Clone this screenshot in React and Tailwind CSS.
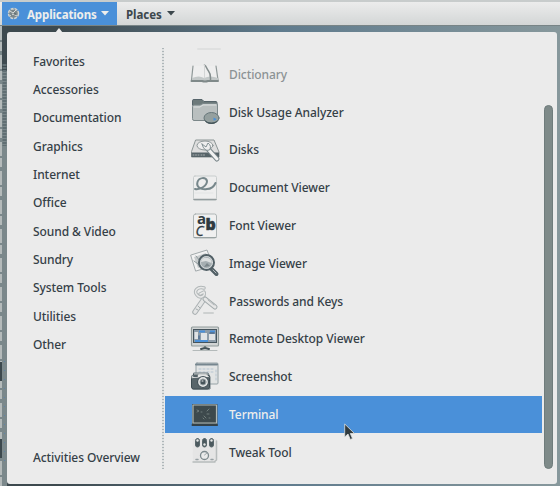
import React from 'react';

function IconFrame({ children }) {
  return (
    <svg viewBox="0 0 30 30" className="h-[30px] w-[30px] shrink-0 overflow-visible" fill="none" strokeLinecap="round" strokeLinejoin="round">
      {children}
    </svg>
  );
}

const DictionaryIcon = () => (
  <IconFrame>
    <path d="M3 7 L1.5 22 L28 22 L26.5 7" fill="#eeeeee" />
    <path d="M3 7 L1.500 21 M26 7 L28 21" stroke="#8f9898" strokeWidth="1.200" />
    <path d="M2 19 Q9 16 14 19 Q20 16 28 19 V22 H2Z" fill="#c3c8c8" />
    <path d="M1.500 22 H12 Q15 23 18 22 H28" stroke="#7f8989" strokeWidth="2" />
    <path d="M14.500 6 C17 8 16 9 18.500 12 C21 15 20.500 17 20.500 21" stroke="#848d8d" strokeWidth="1.500" />
    <path d="M14.500 6 V19" stroke="#d3d5d5" />
  </IconFrame>
);

const DiskUsageIcon = () => (
  <IconFrame>
    <path d="M2.500 8 V3.500 Q2.500 2.500 4 2.500 H12 L14 4.500 H26 Q27 4.500 27 6 V9Z" fill="#6d7a7b" stroke="#56646a" />
    <path d="M2.500 9 Q2.500 8 4 8 H10 L13 6.500 H26 Q27.500 6.500 27.500 8 V22 Q27.500 23.500 26 23.500 H4 Q2.500 23.500 2.500 22Z" fill="#b9bfbf" stroke="#7b8789" />
    <path d="M4 10 H10 L13 8 H26" stroke="#dfe2e2" />
    <ellipse cx="21.500" cy="21" rx="7.500" ry="5.500" fill="#95a09f" stroke="#66767a" />
    <path d="M14.500 23 Q21 28 28.500 23 Q26 27 21.500 27 Q16 27 14.500 23Z" fill="#46565b" />
    <path d="M23.500 20.500 L26.500 22 Q26 23.500 23.500 23.500Z" fill="#4a90d9" />
  </IconFrame>
);

const DisksIcon = () => (
  <IconFrame>
    <path d="M6 5 H24 L29 17 V22 H1.500 V17Z" fill="#dedede" stroke="#8b9494" />
    <path d="M1.500 17.500 H29 V22 H1.500Z" fill="#566368" />
    <ellipse cx="15" cy="10.500" rx="8" ry="4.500" stroke="#8d9697" fill="#eeeeee" />
    <path d="M3 20 H9 M11 20 H15" stroke="#a9b0b1" strokeDasharray="1 1.500" />
    <path d="M18 14 L27 24" stroke="#7b878b" strokeWidth="5" />
    <path d="M18 14 L27 24" stroke="#f3f3f3" strokeWidth="3" />
    <path d="M12 9 L16 12 L18 8 Q22 11 19.500 15 Q14 17 12 9Z" fill="#eeeeee" stroke="#829093" />
  </IconFrame>
);

const DocumentIcon = () => (
  <IconFrame>
    <rect x="3.500" y="3" width="23" height="24" rx="1.500" fill="#eeeeee" stroke="#c8cdcd" />
    <path d="M4 26.500 H26" stroke="#929b9d" strokeWidth="1.500" />
    <path d="M5 16 C10 17 17 13 17 8 C16 4 9 4 7.500 9 C6 14 11 17 17 16 Q23 16 25.500 10" stroke="#77878b" strokeWidth="2" />
    <path d="M5 20 H23" stroke="#e2e4e4" />
  </IconFrame>
);

const FontIcon = () => (
  <IconFrame>
    <rect x="3.500" y="3" width="23" height="24" rx="2" fill="#f0f0f0" stroke="#aeb5b5" />
    <path d="M4 26.500 H26" stroke="#99a2a2" />
    <text x="7" y="13" fill="#303b40" className="font-['Open_Sans',sans-serif] text-[15px] font-bold">a</text>
    <text x="15.500" y="18.500" fill="#303b40" stroke="#303b40" strokeWidth=".5" className="font-['Open_Sans',sans-serif] text-[16px] font-extrabold">b</text>
    <text x="5.500" y="24.500" fill="#303b40" stroke="#303b40" strokeWidth=".3" className="font-['Open_Sans',sans-serif] text-[14px] italic">C</text>
  </IconFrame>
);

const ImageIcon = () => (
  <IconFrame>
    <path d="M1 7 L17 2 L23 18 L6 23Z" fill="#f2f2f2" stroke="#a3aaac" />
    <path d="M4 9 L16 5 L20 16 L8 20Z" fill="#c8cccd" />
    <path d="M4 13 L12 19 M6 8 L10 13" stroke="#8f9a9d" />
    <path d="M21.500 21 L26.500 26" stroke="#526066" strokeWidth="4" />
    <path d="M23 22 L26 25" stroke="#b3b9bc" strokeWidth="1" />
    <circle cx="16.500" cy="14.500" r="7.500" fill="#a6afb2" stroke="#526066" strokeWidth="2" />
    <path d="M11 14 Q12 8.500 18 10 Q22 11 21.500 15 L16 13Z" fill="#dde0e0" />
    <circle cx="16.500" cy="14.500" r="6" stroke="#dce0e1" strokeWidth=".8" />
    <path d="M14 19 L17 15 L20 18" fill="#7c878b" />
  </IconFrame>
);

const KeysIcon = () => (
  <IconFrame>
    <path d="M14 27 H23" stroke="#cdd0d0" strokeWidth="2" />
    <path d="M14 13 L5 26" stroke="#aab0b2" strokeWidth="5.500" />
    <path d="M14 13 L5 26" stroke="#e4e5e5" strokeWidth="3.500" />
    <path d="M8 20 L10 22 M6 23 L8 24" stroke="#a5adae" />
    <path d="M15 13 L25 21" stroke="#a2aaac" strokeWidth="5" />
    <path d="M15 13 L25 21" stroke="#e6e6e6" strokeWidth="3" />
    <path d="M18 14 L24 19" stroke="#b2b8ba" />
    <path d="M14 2 C8 0 3 5 7 9 C10 13 16 10 14 6 L10 8" stroke="#b1b7b8" strokeWidth="3.500" />
    <path d="M14 2 C8 0 3 5 7 9 C10 13 16 10 14 6 L10 8" stroke="#e8e8e8" strokeWidth="1.500" />
  </IconFrame>
);

const RemoteIcon = () => (
  <IconFrame>
    <rect x="1.500" y="3" width="27" height="19" rx="1" fill="#d1d4d4" stroke="#919b9b" strokeWidth="1.200" />
    <rect x="3" y="5" width="24" height="14" fill="#45545d" />
    <rect x="4" y="6" width="22" height="12" fill="#8c9ba8" />
    <path d="M4.500 8 H8 V15 H4.500Z M11 9 H17 V17 H11Z M19 10 H25 V16 H19Z" fill="#e0e3e5" />
    <path d="M9 7.500 H15 M20 7.500 H25 M5 17 H18" stroke="#4a90d9" strokeWidth="2" strokeLinecap="butt" />
    <path d="M20 9 H24 M9 12 V15" stroke="#4d6f93" strokeWidth="1.500" />
    <path d="M14 22 L13 25 H17 L16 22" fill="#768282" />
    <path d="M11 25 Q15 23.500 19 25" stroke="#435157" strokeWidth="2" />
    <path d="M3 26.500 H27" stroke="#b4baba" />
  </IconFrame>
);

const ScreenshotIcon = () => (
  <IconFrame>
    <rect x="6" y="1" width="22" height="21" rx="1" fill="#e2e4e4" stroke="#96a2a6" />
    <path d="M6 2.500 H28" stroke="#76868f" strokeWidth="2" strokeDasharray="10 1" />
    <path d="M26 8 V20 M9 7 H23 M9 10 H23" stroke="#b6c4d1" strokeDasharray="2 2" />
    <path d="M4 11 H18 L20 15 V27 H3Z" fill="#d4d7d7" stroke="#69777d" />
    <rect x="1.500" y="13" width="18" height="14" rx="2" fill="#58656a" stroke="#3e4c52" />
    <path d="M2 16 V14 H7 L9 12 H16 L19 15" fill="#e3e4e4" stroke="#b6bcbc" />
    <circle cx="13" cy="20" r="5.500" fill="#e3e5e5" stroke="#455359" strokeWidth="1.200" />
    <circle cx="13" cy="20" r="3" fill="#46545a" stroke="#98a1a4" />
    <path d="M12 19 H13" stroke="#f1f1f1" />
    <path d="M4 14 H7" stroke="#526066" strokeWidth="2" />
  </IconFrame>
);

const TerminalIcon = () => (
  <IconFrame>
    <rect x="2" y="4" width="25.500" height="22" rx=".5" fill="#414e53" />
    <path d="M3 5 H26.500 V23 H3Z" fill="#3d494c" stroke="#b2b9b5" strokeWidth="1.200" />
    <path d="M7 10 L9 11 L7 12 M11 12 H12 M14 16 L16 18 M19 9 L17 11 M13 18 L14 19 M17 14 H19 M19 18 H20" stroke="#7d8a88" strokeWidth=".8" />
    <path d="M2.500 25 H27" stroke="#344148" strokeWidth="2" />
  </IconFrame>
);

const TweakIcon = () => (
  <IconFrame>
    <path d="M2.500 2 H26.500 V24 L24 26 H3Z" fill="#e5e5e5" />
    <path d="M26.500 4 V23 L24 25 M3 25 H25" stroke="#b8bdbd" strokeWidth="1.500" />
    {[7.5, 14.5, 21.5].map((x, i) => (
      <g key={x}>
        <rect x={x - 2} y="1.500" width="4" height="8.500" rx="2" fill="#4c5a5f" stroke="#59676b" />
        <circle cx={x} cy={i === 1 ? 7.5 : 3.5} r="1.200" fill="#e6e8e8" />
      </g>
    ))}
    <circle cx="14.500" cy="18.500" r="4" fill="#e9eaea" stroke="#7c898d" strokeWidth="1.300" />
    <path d="M14.500 18 L17 16" stroke="#a0a8aa" />
    <path d="M6 22.500 H8 M21 22.500 H23" stroke="#98a1a4" strokeWidth="1.500" />
  </IconFrame>
);

const categories = ['Favorites', 'Accessories', 'Documentation', 'Graphics', 'Internet', 'Office', 'Sound & Video', 'Sundry', 'System Tools', 'Utilities', 'Other'];

const apps = [
  ['Dictionary', DictionaryIcon],
  ['Disk Usage Analyzer', DiskUsageIcon],
  ['Disks', DisksIcon],
  ['Document Viewer', DocumentIcon],
  ['Font Viewer', FontIcon],
  ['Image Viewer', ImageIcon],
  ['Passwords and Keys', KeysIcon],
  ['Remote Desktop Viewer', RemoteIcon],
  ['Screenshot', ScreenshotIcon],
  ['Terminal', TerminalIcon],
  ['Tweak Tool', TweakIcon],
];

function Caret() {
  return (
    <svg viewBox="0 0 8 5" className="mb-0.5 h-[5px] w-2 shrink-0">
      <path d="M0 0 H8 L4 4.500Z" fill="currentColor" />
    </svg>
  );
}

function TopBar() {
  return (
    <header className="flex h-[26px] border-b border-[#788486] border-t-2 border-t-[#c8cccc] bg-linear-to-b from-[#ececec] to-[#d3d6d6] pl-0.5 text-[11.5px] font-bold">
      <div className="flex w-[115px] items-center bg-[#4a90d9] pl-[5px] pt-0.5 text-[#eeeeec]">
        <svg viewBox="0 0 13 13" className="mb-0.5 h-[13px] w-[13px] shrink-0">
          <circle cx="6.500" cy="6.500" r="5" fill="#7d898b" stroke="#d0d3d0" strokeWidth="1.500" strokeDasharray="3 1" />
          <path d="M3 4 L6 6 L9 3 M3 9 L6 7 L10 9 M6 2 V5" stroke="#d9dbd8" fill="none" />
          <path d="M5 4 H7 M7 7 H9 M4 8 H5" stroke="#4c5b60" />
        </svg>
        <span className="ml-[7px] mr-[5px] w-[69px] whitespace-nowrap tracking-[-0.11px]">Applications</span>
        <Caret />
      </div>
      <div className="flex items-center pl-[9px] pt-0.5 text-[#3c474c]">
        <span className="mr-[5px] w-[36px] whitespace-nowrap tracking-[-0.05px]">Places</span>
        <Caret />
      </div>
    </header>
  );
}

export default function App() {
  return (
    <div className="h-[486px] w-[560px] overflow-hidden bg-[#8f9999] font-['Noto_Sans','Open_Sans',sans-serif] text-[12px] font-medium tracking-[-0.08px] text-[#354047]">
      <TopBar />
      <div className="relative flex h-[460px] bg-linear-to-r from-[#3d494e] from-10% via-[#5f7b8d] via-50% to-[#87989c] pl-[7px] pt-1.5">
        <svg className="absolute left-0 top-0 h-[460px] w-[7px]">
          <path d="M0 0 H7 V460 H0Z" fill="#7b888b" />
          <path d="M2 0 H7 V45 H2Z" fill="#3e4a50" />
          <path d="M4.500 38 V120" stroke="#606e73" strokeWidth="4" strokeDasharray="2 1" />
          <path d="M1 0 V460" stroke="#b4baba" strokeWidth="2" strokeDasharray="14 2 9 4" />
          <path d="M1 336 V355 M1 413 V432" stroke="#3c484d" strokeWidth="2" />
          <path d="M4.500 335 V440" stroke="#5e83a8" strokeDasharray="1 8" />
        </svg>
        <svg viewBox="0 0 8 5" className="absolute left-[55px] top-[2px] h-[5px] w-2">
          <path d="M0 5 L4 0 L8 5Z" fill="#ececec" />
        </svg>
        <main className="flex h-[452px] w-[550px] rounded-[3px] bg-[#ebebeb] pt-[15px]">
          <nav className="flex h-[425.4px] w-[155px] flex-col pl-[26px] pt-[0.4px]">
            {categories.map((name) => (
              <div key={name} className="flex h-[28.33px] items-center whitespace-nowrap">{name}</div>
            ))}
            <div className="mt-auto flex h-[28.33px] items-center whitespace-nowrap">Activities Overview</div>
          </nav>
          <div className="mt-px h-[421px] w-[2px] bg-[repeating-linear-gradient(to_bottom,#aeb6b9_0px,#aeb6b9_1px,#e0e2e2_1px,#e0e2e2_3px)]" />
          <section className="ml-px w-[377px]">
            <div className="flex h-[8.5px] justify-start pl-[32px]">
              <div className="mt-px h-0.5 w-6 rounded-full bg-[#dfe0e0]" />
            </div>
            {apps.map(([name, Icon]) => (
              <div key={name} className={`flex h-[37.8px] items-center gap-[9px] pl-[25px] ${name === 'Terminal' ? 'bg-[#4a90d9] text-[#eeeeec]' : name === 'Dictionary' ? 'text-[#8b9294]' : ''}`}>
                <Icon />
                <span className="whitespace-nowrap pt-px">{name}</span>
              </div>
            ))}
          </section>
          <div className="ml-0.5 mt-[58px] h-[364px] w-[9px] rounded-full border border-[#6f7c7c] bg-[#7e8a89]" />
        </main>
        <svg viewBox="0 0 12 18" className="absolute left-[344px] top-[397px] h-[18px] w-3">
          <path d="M.7 1 V14 L4 11 L6.300 16.500 L8.500 15.500 L6.300 10.500 H10.500Z" fill="#303a3e" stroke="#dfe2e2" strokeWidth=".8" />
        </svg>
      </div>
    </div>
  );
}
